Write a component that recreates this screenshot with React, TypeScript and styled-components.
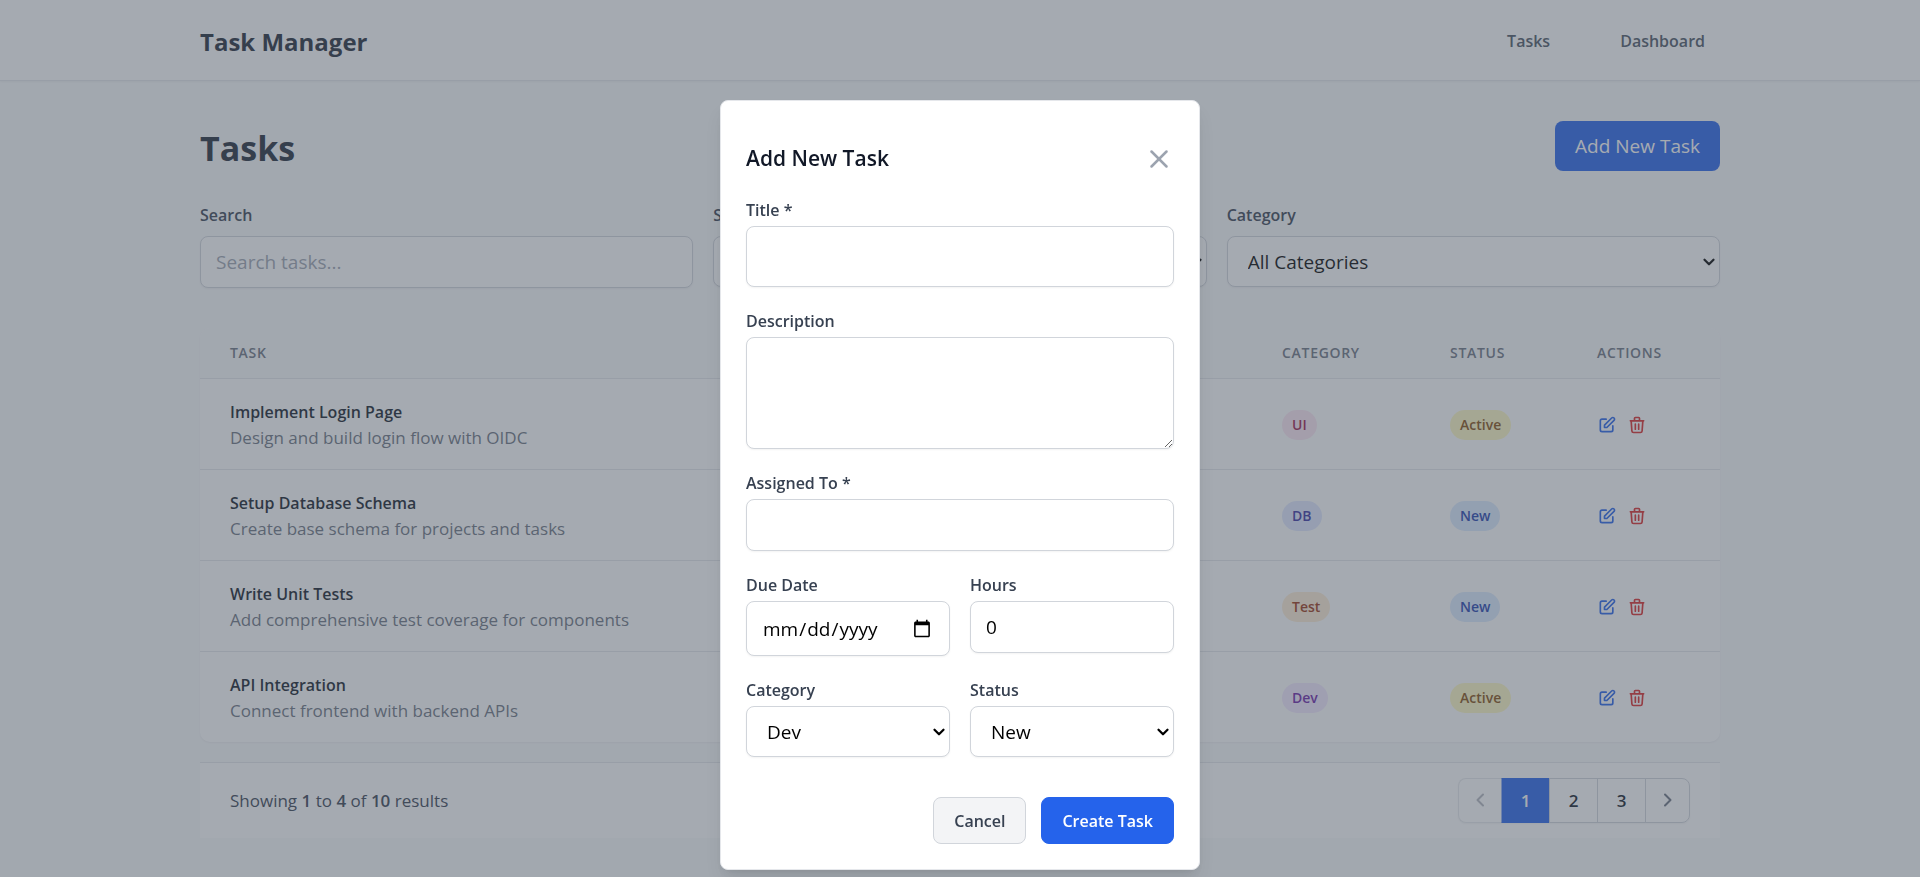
import React from "react";
import styled, { createGlobalStyle } from "styled-components";
import { ChevronDown, X } from "lucide-react";

const GlobalStyle = createGlobalStyle`
  *, *::before, *::after { box-sizing: border-box; }
  body {
    margin: 0;
    min-height: 100vh;
    background: #f9fafb;
    font-family: "Segoe UI", "Open Sans", "Noto Sans", sans-serif;
    font-size: 17px;
    line-height: 25px;
    color: #1f2937;
  }
  button, input, select, textarea { font-family: inherit; margin: 0; }
  h1, h2, p { margin: 0; }
`;

const Header = styled.header`
  background: #fff;
  border-bottom: 1px solid #e5e7eb;
  box-shadow: 0 1px 2px rgba(0, 0, 0, 0.05);
`;

const Container = styled.div`
  max-width: 1600px;
  margin: 0 auto;
  padding: 0 40px;
`;

const HeaderRow = styled(Container)`
  display: flex;
  align-items: center;
  justify-content: space-between;
  height: 80px;
  padding-top: 2px;
`;

const Brand = styled.span`
  font-size: 24px;
  line-height: 35px;
  font-weight: 700;
`;

const Nav = styled.nav`
  display: flex;
  gap: 40px;
`;

const NavLink = styled.a`
  padding: 10px 15px;
  font-size: 16px;
  font-weight: 600;
  color: #4b5563;
  text-decoration: none;
`;

const Main = styled.main`
  padding: 40px 0;
`;

const TitleRow = styled.div`
  display: flex;
  align-items: flex-end;
  justify-content: space-between;
  margin-bottom: 30px;
`;

const PageTitle = styled.h1`
  font-size: 34px;
  line-height: 45px;
  font-weight: 700;
`;

const AddButton = styled.button`
  padding: 10px 20px;
  border: 0;
  border-radius: 8px;
  background: #2563eb;
  color: #fff;
  font-size: 19px;
  line-height: 30px;
`;

const Filters = styled.div`
  display: grid;
  grid-template-columns: repeat(3, 1fr);
  align-items: start;
  gap: 20px;
  margin-bottom: 40px;
`;

const Field = styled.div<{ $gap?: number }>`
  display: flex;
  flex-direction: column;
  gap: ${(p) => p.$gap ?? 2}px;
`;

const Label = styled.label`
  font-size: 16px;
  line-height: 28px;
  font-weight: 600;
  color: #374151;
`;

const control = `
  width: 100%;
  border: 1px solid #d1d5db;
  border-radius: 8px;
  background: #fff;
  box-shadow: 0 1px 2px rgba(0, 0, 0, 0.05);
  font-size: 19px;
  line-height: 30px;
  color: #000;
`;

const Input = styled.input<{ $height?: number }>`
  ${control}
  display: block;
  height: ${(p) => p.$height ?? 52}px;
  padding: 10px 15px;
  &::placeholder { color: #9ca3af; opacity: 1; }
`;

const DateInput = styled(Input)`
  padding-right: 17px;
  &::-webkit-calendar-picker-indicator {
    width: 20px;
    height: 20px;
    padding: 0;
    margin: 0;
  }
`;

const TextArea = styled.textarea`
  ${control}
  display: block;
  height: 112px;
  padding: 10px 15px;
  resize: vertical;
`;

const SelectWrap = styled.div`
  position: relative;
`;

const Select = styled.select`
  ${control}
  display: block;
  height: 51px;
  padding: 0 30px 0 20px;
  appearance: none;
`;

const SelectArrow = styled(ChevronDown)`
  position: absolute;
  top: 50%;
  right: 2px;
  margin-top: -9px;
  pointer-events: none;
  color: #000;
`;

const TableCard = styled.div`
  overflow: hidden;
  border-radius: 10px;
  background: #fff;
  box-shadow: 0 1px 2px rgba(0, 0, 0, 0.05);
`;

const Table = styled.table`
  width: 100%;
  border-collapse: separate;
  border-spacing: 0;
`;

const HeadCell = styled.th<{ $width?: number }>`
  width: ${(p) => (p.$width ? `${p.$width}px` : "auto")};
  padding: 15px 30px;
  background: #f9fafb;
  text-align: left;
  font-size: 14px;
  line-height: 20px;
  font-weight: 600;
  letter-spacing: 0.05em;
  text-transform: uppercase;
  color: #6b7280;
`;

const Cell = styled.td`
  padding: 21px 30px 19px;
  border-top: 1px solid #e5e7eb;
  white-space: nowrap;
`;

const TaskName = styled.div`
  font-size: 16px;
  font-weight: 600;
  color: #111827;
`;

const TaskNote = styled.div`
  color: #6b7280;
`;

const Badge = styled.span<{ $bg: string; $fg: string }>`
  display: inline-block;
  padding: 5px 10px;
  border-radius: 15px;
  background: ${(p) => p.$bg};
  color: ${(p) => p.$fg};
  font-size: 14px;
  line-height: 20px;
  font-weight: 600;
`;

const Actions = styled.div`
  display: flex;
  gap: 10px;
`;

const IconButton = styled.button<{ $color: string }>`
  display: flex;
  padding: 0;
  border: 0;
  background: none;
  color: ${(p) => p.$color};
`;

const Footer = styled.div`
  display: flex;
  align-items: center;
  justify-content: space-between;
  margin-top: 20px;
  padding: 15px 30px;
  border-top: 1px solid #e5e7eb;
  background: #fff;
`;

const Summary = styled.p`
  color: #374151;
  strong { font-weight: 600; }
`;

const Pager = styled.nav`
  display: flex;
  border-radius: 8px;
  box-shadow: 0 1px 2px rgba(0, 0, 0, 0.05);
`;

const PageButton = styled.button<{ $active?: boolean }>`
  display: flex;
  align-items: center;
  justify-content: center;
  width: 49px;
  height: 45px;
  margin-left: -1px;
  padding: 0;
  border: 1px solid ${(p) => (p.$active ? "#2563eb" : "#d1d5db")};
  background: ${(p) => (p.$active ? "#2563eb" : "#fff")};
  color: ${(p) => (p.$active ? "#fff" : "#111827")};
  font-size: 17px;
  font-weight: 600;
`;

const StepButton = styled(PageButton)`
  width: 44px;
  color: #6b7280;
  &:first-child { margin-left: 0; border-right: 0; border-radius: 8px 0 0 8px; }
  &:last-child { width: 45px; border-radius: 0 8px 8px 0; }
  &:disabled { opacity: 0.5; }
`;

const Overlay = styled.div`
  position: fixed;
  inset: 0;
  display: flex;
  align-items: flex-start;
  justify-content: center;
  padding-top: 100px;
  overflow: hidden;
  background: rgba(75, 85, 99, 0.5);
`;

const Dialog = styled.div`
  width: 480px;
  padding: 25px;
  border: 1px solid #e5e7eb;
  border-radius: 8px;
  background: #fff;
  box-shadow: 0 12px 19px -4px rgba(0, 0, 0, 0.1), 0 5px 8px -5px rgba(0, 0, 0, 0.1);
`;

const DialogHeader = styled.div`
  display: flex;
  align-items: center;
  justify-content: space-between;
  margin: 15px 0 20px;
`;

const DialogTitle = styled.h2`
  font-size: 21px;
  line-height: 35px;
  font-weight: 600;
  color: #111827;
`;

const Form = styled.form`
  display: flex;
  flex-direction: column;
  gap: 20px;
`;

const FieldPair = styled.div`
  display: grid;
  grid-template-columns: 1fr 1fr;
  align-items: start;
  gap: 20px;
`;

const FormActions = styled.div`
  display: flex;
  justify-content: flex-end;
  gap: 15px;
  margin-top: 20px;
`;

const FormButton = styled.button<{ $primary?: boolean }>`
  padding: 11px 20px 9px;
  border: 1px solid ${(p) => (p.$primary ? "#2563eb" : "#d1d5db")};
  border-radius: 8px;
  background: ${(p) => (p.$primary ? "#2563eb" : "#f3f4f6")};
  color: ${(p) => (p.$primary ? "#fff" : "#374151")};
  font-size: 16px;
  line-height: 25px;
  font-weight: 600;
`;

const EditIcon = () => (
  <svg width="20" height="20" viewBox="0 0 24 24" fill="none" stroke="currentColor" strokeWidth="2" strokeLinecap="round" strokeLinejoin="round">
    <path d="M11 5H6a2 2 0 00-2 2v11a2 2 0 002 2h11a2 2 0 002-2v-5m-1.414-9.414a2 2 0 112.828 2.828L11.828 15H9v-2.828l8.586-8.586z" />
  </svg>
);

const TrashIcon = () => (
  <svg width="20" height="20" viewBox="0 0 24 24" fill="none" stroke="currentColor" strokeWidth="2" strokeLinecap="round" strokeLinejoin="round">
    <path d="M19 7l-.867 12.142A2 2 0 0116.138 21H7.862a2 2 0 01-1.995-1.858L5 7m5 4v6m4-6v6m1-10V4a1 1 0 00-1-1h-4a1 1 0 00-1 1v3M4 7h16" />
  </svg>
);

const Chevron = ({ points }: { points: string }) => (
  <svg width="25" height="25" viewBox="0 0 25 25" fill="none" stroke="currentColor" strokeWidth="2" strokeLinecap="round" strokeLinejoin="round">
    <polyline points={points} />
  </svg>
);

const LEFT = "15,6.5 9.5,12 15,17.5";
const RIGHT = "10,6.5 15.5,12 10,17.5";

const tones: Record<string, [string, string]> = {
  UI: ["#fce7f3", "#9d174d"],
  DB: ["#e0e7ff", "#3730a3"],
  Test: ["#ffedd5", "#9a3412"],
  Dev: ["#f3e8ff", "#6b21a8"],
  Active: ["#fef9c3", "#854d0e"],
  New: ["#dbeafe", "#1e40af"],
};

const tasks = [
  { name: "Implement Login Page", note: "Design and build login flow with OIDC", category: "UI", status: "Active" },
  { name: "Setup Database Schema", note: "Create base schema for projects and tasks", category: "DB", status: "New" },
  { name: "Write Unit Tests", note: "Add comprehensive test coverage for components", category: "Test", status: "New" },
  { name: "API Integration", note: "Connect frontend with backend APIs", category: "Dev", status: "Active" },
];

const Tag = ({ name }: { name: string }) => (
  <Badge $bg={tones[name][0]} $fg={tones[name][1]}>{name}</Badge>
);

interface SelectFieldProps {
  id: string;
  label: string;
  options: string[];
  gap?: number;
}

const SelectField = ({ id, label, options, gap }: SelectFieldProps) => (
  <Field $gap={gap}>
    <Label htmlFor={id}>{label}</Label>
    <SelectWrap>
      <Select id={id}>
        {options.map((o) => <option key={o}>{o}</option>)}
      </Select>
      <SelectArrow size={18} strokeWidth={3} aria-hidden />
    </SelectWrap>
  </Field>
);

const AddTaskDialog = () => (
  <Overlay>
    <Dialog role="dialog" aria-modal="true" aria-labelledby="dialog-title">
      <DialogHeader>
        <DialogTitle id="dialog-title">Add New Task</DialogTitle>
        <IconButton type="button" $color="#9ca3af" aria-label="Close">
          <X size={30} strokeWidth={2} />
        </IconButton>
      </DialogHeader>
      <Form>
        <Field>
          <Label htmlFor="title">Title *</Label>
          <Input id="title" type="text" required $height={61} />
        </Field>
        <Field>
          <Label htmlFor="description">Description</Label>
          <TextArea id="description" />
        </Field>
        <Field>
          <Label htmlFor="assignee">Assigned To *</Label>
          <Input id="assignee" type="text" required />
        </Field>
        <FieldPair>
          <Field>
            <Label htmlFor="due">Due Date</Label>
            <DateInput id="due" type="date" $height={55} />
          </Field>
          <Field>
            <Label htmlFor="hours">Hours</Label>
            <Input id="hours" type="number" defaultValue={0} />
          </Field>
        </FieldPair>
        <FieldPair>
          <SelectField id="task-category" label="Category" options={["Dev", "UI", "DB", "Test"]} />
          <SelectField id="task-status" label="Status" options={["New", "Active"]} />
        </FieldPair>
        <FormActions>
          <FormButton type="button">Cancel</FormButton>
          <FormButton type="submit" $primary>Create Task</FormButton>
        </FormActions>
      </Form>
    </Dialog>
  </Overlay>
);

export default function App() {
  return (
    <>
      <GlobalStyle />
      <Header>
        <HeaderRow>
          <Brand>Task Manager</Brand>
          <Nav>
            <NavLink href="#tasks">Tasks</NavLink>
            <NavLink href="#dashboard">Dashboard</NavLink>
          </Nav>
        </HeaderRow>
      </Header>
      <Main>
        <Container>
          <TitleRow>
            <PageTitle>Tasks</PageTitle>
            <AddButton type="button">Add New Task</AddButton>
          </TitleRow>
          <Filters>
            <Field $gap={7}>
              <Label htmlFor="search">Search</Label>
              <Input id="search" type="text" placeholder="Search tasks..." />
            </Field>
            <SelectField id="filter-status" label="Status" options={["All Statuses", "New", "Active"]} gap={7} />
            <SelectField id="filter-category" label="Category" options={["All Categories", "UI", "DB", "Test", "Dev"]} gap={7} />
          </Filters>
          <TableCard>
            <Table>
              <thead>
                <tr>
                  <HeadCell>Task</HeadCell>
                  <HeadCell $width={168}>Category</HeadCell>
                  <HeadCell $width={147}>Status</HeadCell>
                  <HeadCell $width={153}>Actions</HeadCell>
                </tr>
              </thead>
              <tbody>
                {tasks.map((t) => (
                  <tr key={t.name}>
                    <Cell>
                      <TaskName>{t.name}</TaskName>
                      <TaskNote>{t.note}</TaskNote>
                    </Cell>
                    <Cell><Tag name={t.category} /></Cell>
                    <Cell><Tag name={t.status} /></Cell>
                    <Cell>
                      <Actions>
                        <IconButton type="button" $color="#2563eb" aria-label="Edit"><EditIcon /></IconButton>
                        <IconButton type="button" $color="#dc2626" aria-label="Delete"><TrashIcon /></IconButton>
                      </Actions>
                    </Cell>
                  </tr>
                ))}
              </tbody>
            </Table>
          </TableCard>
          <Footer>
            <Summary>
              Showing <strong>1</strong> to <strong>4</strong> of <strong>10</strong> results
            </Summary>
            <Pager aria-label="Pagination">
              <StepButton type="button" disabled aria-label="Previous"><Chevron points={LEFT} /></StepButton>
              <PageButton type="button" $active>1</PageButton>
              <PageButton type="button">2</PageButton>
              <PageButton type="button">3</PageButton>
              <StepButton type="button" aria-label="Next"><Chevron points={RIGHT} /></StepButton>
            </Pager>
          </Footer>
        </Container>
      </Main>
      <AddTaskDialog />
    </>
  );
}
